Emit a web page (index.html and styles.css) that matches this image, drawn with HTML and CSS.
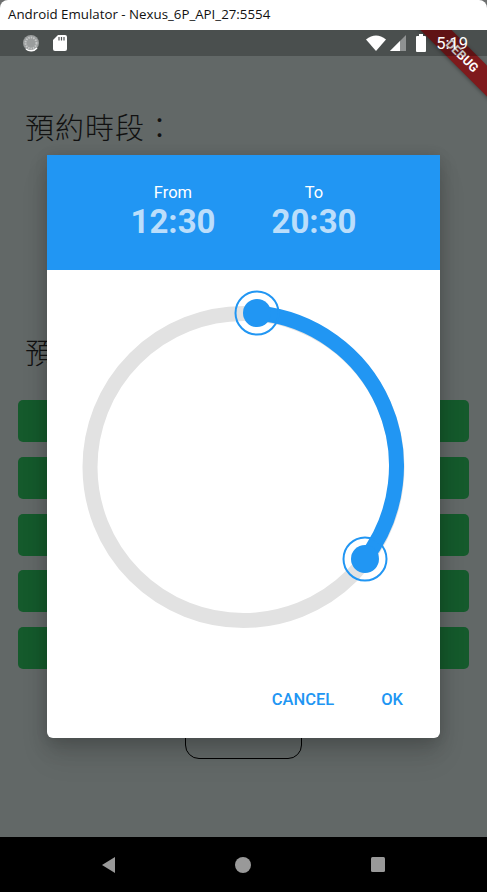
FILE: index.html
```html
<!DOCTYPE html>
<html lang="en">
<head>
    <meta charset="UTF-8">
    <meta name="viewport" content="width=device-width, initial-scale=1.0">
    <title>Android Emulator - Nexus_6P_API_27:5554</title>
    <link rel="stylesheet" href="styles.css">
</head>
<body>
    <div class="titlebar">Android Emulator - Nexus_6P_API_27:5554</div>

    <div class="screen">
        <div class="statusbar">
            <div class="status-left">
                <svg width="18" height="18" viewBox="0 0 18 18">
                    <circle cx="9" cy="9" r="8" fill="#9a9d9d"/>
                    <circle cx="9" cy="9" r="5.5" fill="none" stroke="#c4c6c6" stroke-width="2" stroke-dasharray="1.5 1"/>
                    <path d="M15 14 A8 8 0 0 1 4 15" fill="none" stroke="#fff" stroke-width="1.5"/>
                </svg>
                <svg width="14" height="16" viewBox="0 0 14 16">
                    <path d="M5 0 H12 a2 2 0 0 1 2 2 V14 a2 2 0 0 1 -2 2 H2 a2 2 0 0 1 -2 -2 V5 Z" fill="#fff"/>
                    <path d="M6 2 V5.5 M8.5 2 V5.5 M11 2 V5.5" stroke="#4f5354" stroke-width="1.2"/>
                </svg>
            </div>
            <div class="status-right">
                <svg width="20" height="16" viewBox="0 0 20 16">
                    <path d="M0 4.5 Q10 -3.5 20 4.5 L10 16 Z" fill="#fff"/>
                </svg>
                <svg class="icon-signal" width="16" height="16" viewBox="0 0 16 16">
                    <path d="M16 0 V16 H0 Z" fill="#8f9292"/>
                    <path d="M10 6 V16 H0 Z" fill="#fff"/>
                </svg>
                <svg class="icon-battery" width="10" height="18" viewBox="0 0 10 18">
                    <path d="M3 0 H7 V2 H9 a1 1 0 0 1 1 1 V17 a1 1 0 0 1 -1 1 H1 a1 1 0 0 1 -1 -1 V3 a1 1 0 0 1 1 -1 H3 Z" fill="#fff"/>
                </svg>
                <span class="clock">5:19</span>
            </div>
        </div>

        <div class="app">
            <h2 class="label">預約時段：</h2>
            <h2 class="label label-second">預約項目：</h2>
            <div class="option"></div>
            <div class="option"></div>
            <div class="option"></div>
            <div class="option"></div>
            <div class="option"></div>
            <div class="outline-btn"></div>
        </div>

        <div class="navbar">
            <svg width="13" height="16" viewBox="0 0 13 16"><path d="M13 0 V16 L0 8 Z" fill="#999"/></svg>
            <svg width="16" height="16" viewBox="0 0 16 16"><circle cx="8" cy="8" r="8" fill="#999"/></svg>
            <svg width="14" height="15" viewBox="0 0 14 15"><rect width="14" height="15" rx="1.5" fill="#999"/></svg>
        </div>

        <div class="debug-banner"><span>DEBUG</span></div>

        <div class="dialog">
            <div class="dialog-head">
                <div class="time-col">
                    <span class="time-label">From</span>
                    <span class="time-value">12:30</span>
                </div>
                <div class="time-col">
                    <span class="time-label">To</span>
                    <span class="time-value">20:30</span>
                </div>
            </div>

            <svg class="dial" width="393" height="400" viewBox="0 0 393 400">
                <circle cx="196.5" cy="197" r="153.5" fill="none" stroke="#e2e2e2" stroke-width="15"/>
                <path d="M210 43 A153.5 153.5 0 0 1 318 289" fill="none" stroke="#2196f3" stroke-width="15"/>
                <circle cx="210" cy="43" r="21.5" fill="none" stroke="#2196f3" stroke-width="2"/>
                <circle cx="210" cy="43" r="14" fill="#2196f3"/>
                <circle cx="318" cy="289" r="21.5" fill="none" stroke="#2196f3" stroke-width="2"/>
                <circle cx="318" cy="289" r="14" fill="#2196f3"/>
            </svg>

            <div class="dialog-actions">
                <button type="button">CANCEL</button>
                <button type="button">OK</button>
            </div>
        </div>
    </div>
</body>
</html>
```

FILE: styles.css
```css
html, body {
    margin: 0;
    padding: 0;
}
body {
    width: 487px;
    height: 892px;
    overflow: hidden;
    display: flex;
    flex-direction: column;
    background-color: #6d6f6f;
    font-family: 'Roboto', sans-serif;
}
.titlebar {
    height: 30px;
    line-height: 29px;
    padding-left: 8px;
    background-color: #fff;
    border-radius: 8px 8px 0 0;
    font-family: 'Open Sans', sans-serif;
    font-size: 13.3px;
    color: #111;
}
.screen {
    flex: 1;
    position: relative;
    overflow: hidden;
    display: flex;
    flex-direction: column;
    background-color: #626867;
}
/* sits over the debug banner, the tint darkens it like on the device */
.statusbar {
    position: relative;
    z-index: 2;
    height: 26px;
    display: flex;
    justify-content: space-between;
    align-items: center;
    background-color: rgba(0, 0, 0, 0.24);
}
.status-left {
    display: flex;
    align-items: center;
    gap: 13px;
    padding-left: 22px;
}
.status-right {
    display: flex;
    align-items: center;
    padding-right: 19px;
}
.icon-signal {
    margin-left: 4px;
}
.icon-battery {
    margin-left: 10px;
}
.clock {
    margin-left: 10px;
    font-size: 16.5px;
    color: #fff;
}
.app {
    flex: 1;
    padding: 52px 18px 0;
}
.label {
    margin: 0 0 0 7px;
    height: 36px;
    line-height: 36px;
    font-family: 'Noto Sans CJK TC', sans-serif;
    font-size: 29px;
    font-weight: 200;
    letter-spacing: 1px;
    color: #111;
}
.label-second {
    margin-top: 189px;
    margin-bottom: 31px;
}
.option {
    height: 42px;
    margin-bottom: 14.75px;
    background-color: #155a2c;
    border-radius: 5px;
}
.outline-btn {
    width: 115px;
    height: 42px;
    margin: 46px 0 0 167px;
    border: 1px solid #000;
    border-radius: 14px;
}
.navbar {
    height: 55px;
    display: flex;
    align-items: center;
    background-color: #000;
    padding-left: 102px;
    gap: 120px;
}
.debug-banner {
    position: absolute;
    z-index: 1;
    top: 15px;
    left: 397px;
    width: 130px;
    height: 22px;
    transform: rotate(45deg);
    background-color: #7f1a1c;
    box-shadow: 0 1px 4px rgba(0, 0, 0, 0.35);
    text-align: center;
    line-height: 22px;
    font-size: 12.5px;
    font-weight: 700;
    color: #fff;
}
.dialog {
    position: absolute;
    z-index: 3;
    left: 47px;
    top: 125px;
    width: 393px;
    height: 583px;
    display: flex;
    flex-direction: column;
    background-color: #fff;
    border-radius: 0 0 6px 6px;
    box-shadow: 0 9px 20px rgba(0, 0, 0, 0.16), 0 20px 30px rgba(0, 0, 0, 0.08), 0 0 14px rgba(0, 0, 0, 0.08);
}
.dialog-head {
    height: 115px;
    display: flex;
    justify-content: center;
    align-items: center;
    gap: 56px;
    background-color: #2196f3;
}
.time-col {
    display: flex;
    flex-direction: column;
    align-items: center;
    padding-top: 1px;
}
.time-label {
    font-size: 16.5px;
    line-height: 18px;
    color: #fff;
}
.time-value {
    font-size: 33px;
    line-height: 40px;
    font-weight: 700;
    color: #bbdefb;
}
.dial {
    display: block;
}
.dialog-actions {
    display: flex;
    justify-content: flex-end;
    gap: 47px;
    padding: 20px 37px 0 0;
}
.dialog-actions button {
    padding: 0;
    border: none;
    background: none;
    font-family: 'Roboto', sans-serif;
    font-size: 16.5px;
    font-weight: 500;
    line-height: 20px;
    color: #2196f3;
    cursor: pointer;
}
```
